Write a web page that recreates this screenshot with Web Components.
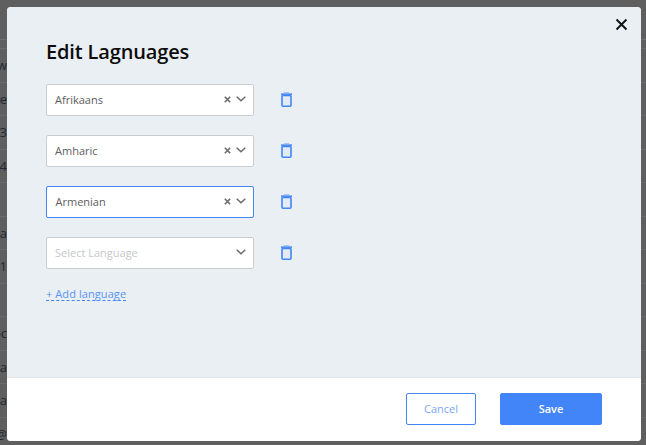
<!DOCTYPE html>
<html><head><meta charset="utf-8"><style>
html,body{margin:0;padding:0;width:646px;height:445px;overflow:hidden;background:#5f5f5f;font-family:"Open Sans",sans-serif}
</style></head><body>
<lang-page></lang-page>
<script>
const def=(n,css,html)=>{customElements.define(n,class extends HTMLElement{connectedCallback(){if(this.shadowRoot)return;const r=this.attachShadow({mode:'open'});r.innerHTML=`<style>${css}</style>`+html(this);}});};

def('bg-table',`
:host{display:block;width:646px;height:445px;background:#5f5f5f;overflow:hidden;padding-top:39px;box-sizing:border-box}
.l{height:9px;border-top:1px solid #6f6f6f;box-sizing:border-box}
.r{height:33.5px;border-top:1px solid #6a6a6a;box-sizing:border-box;width:646px}
.c{width:7px;height:100%;display:flex;justify-content:flex-end;align-items:center;overflow:hidden;white-space:nowrap;font:13px "Open Sans",sans-serif;color:#1d2a33}
`,()=>`<div class="l"></div>`+["w","e","a3","_4","","va","_1","","oc","iia","iia","i@"].map(t=>`<div class="r"><div class="c">${t}</div></div>`).join(''));

def('lang-select',`
:host{display:block;width:208px;height:32px;box-sizing:border-box;background:#fff;border:1px solid #cbcdce;border-radius:2px}
:host([focus]){border-color:#4285f4}
.w{height:100%;box-sizing:border-box;display:flex;align-items:center;padding:0 7px 2px 8px;font-size:11px;color:#5d5d5d}
:host([focus]) .w{padding-left:8.5px}
.t{flex:1}
:host([placeholder]) .t{color:#c6c8c9}
svg{display:block}
.x{margin-right:5.5px;margin-top:1px}
.v{margin-top:-1px}
`,h=>`<div class="w"><span class="t">${h.getAttribute('value')||h.getAttribute('placeholder')}</span>
${h.hasAttribute('value')?`<svg class="x" width="7" height="7" viewBox="0 0 7 7"><path d="M.8.8l5.4 5.4M6.2.8L.8 6.2" stroke="#6b6b6b" stroke-width="1.6" fill="none"/></svg>`:''}
<svg class="v" width="10" height="6" viewBox="0 0 10 6"><path d="M.7.8L5 4.8 9.3.8" stroke="#6b6b6b" stroke-width="1.5" fill="none"/></svg></div>`);

def('trash-icon',`:host{display:block;width:11px;height:15px;margin-top:-1px}svg{display:block}`,
()=>`<svg width="11" height="15" viewBox="0 0 11 15"><path d="M0 1.2h11v1.7H0z" fill="#5b93f5"/><path d="M3 .3h5v1H3z" fill="#8fb5f8"/><rect x="1" y="3.4" width="9" height="10.8" rx="1" fill="#e3ecf6" stroke="#4285f4" stroke-width="1.6"/></svg>`);

def('lang-row',`:host{display:flex;align-items:center;gap:27px;height:32px;margin-bottom:19px}`,()=>`<slot></slot>`);

def('lang-button',`
:host{height:32px;box-sizing:border-box;border:1px solid #4285f4;border-radius:2px;font-size:11px;font-weight:600;display:flex;align-items:center;justify-content:center;padding-bottom:1px}
:host([kind=ghost]){width:70px;color:#7ba6f5;background:#fff;font-weight:400}
:host([kind=primary]){width:102px;color:#fff;background:#4285f9;border-color:#4285f9}
`,()=>`<slot></slot>`);

def('lang-modal',`
:host{display:flex;flex-direction:column;position:absolute;left:7px;top:7px;width:634px;height:434px;border-radius:4px;overflow:hidden;background:#fff}
.b{flex:1;background:#e9eff2;padding:31px 39px 0;position:relative;min-height:0}
h1{margin:0 0 18px;font-size:20px;line-height:28px;font-weight:600;color:#0c0c0c;letter-spacing:-.15px}
.close{position:absolute;top:11px;right:13px;display:block}
a{display:block;width:fit-content;font-size:11px;line-height:12px;letter-spacing:.08px;color:#5b93f5;border-bottom:1px dashed #4285f4;text-decoration:none}
.f{height:64px;flex:none;box-sizing:border-box;border-top:1px solid #e3e6e8;background:#fff;display:flex;align-items:flex-start;justify-content:flex-end;gap:24px;padding:15px 39px 0 0}
`,()=>`<div class="b">
<svg class="close" width="13" height="13" viewBox="0 0 13 13"><path d="M1.5 1.5l10 10M11.5 1.5l-10 10" stroke="#111" stroke-width="1.9" fill="none"/></svg>
<h1>Edit Lagnuages</h1>
<lang-row><lang-select value="Afrikaans"></lang-select><trash-icon></trash-icon></lang-row>
<lang-row><lang-select value="Amharic"></lang-select><trash-icon></trash-icon></lang-row>
<lang-row><lang-select value="Armenian" focus></lang-select><trash-icon></trash-icon></lang-row>
<lang-row><lang-select placeholder="Select Language"></lang-select><trash-icon></trash-icon></lang-row>
<a href="#">+ Add language</a>
</div>
<div class="f"><lang-button kind="ghost">Cancel</lang-button><lang-button kind="primary">Save</lang-button></div>`);

def('lang-page',`:host{display:block;position:relative;width:646px;height:445px}`,
()=>`<bg-table></bg-table><lang-modal></lang-modal>`);
</script>
</body></html>
